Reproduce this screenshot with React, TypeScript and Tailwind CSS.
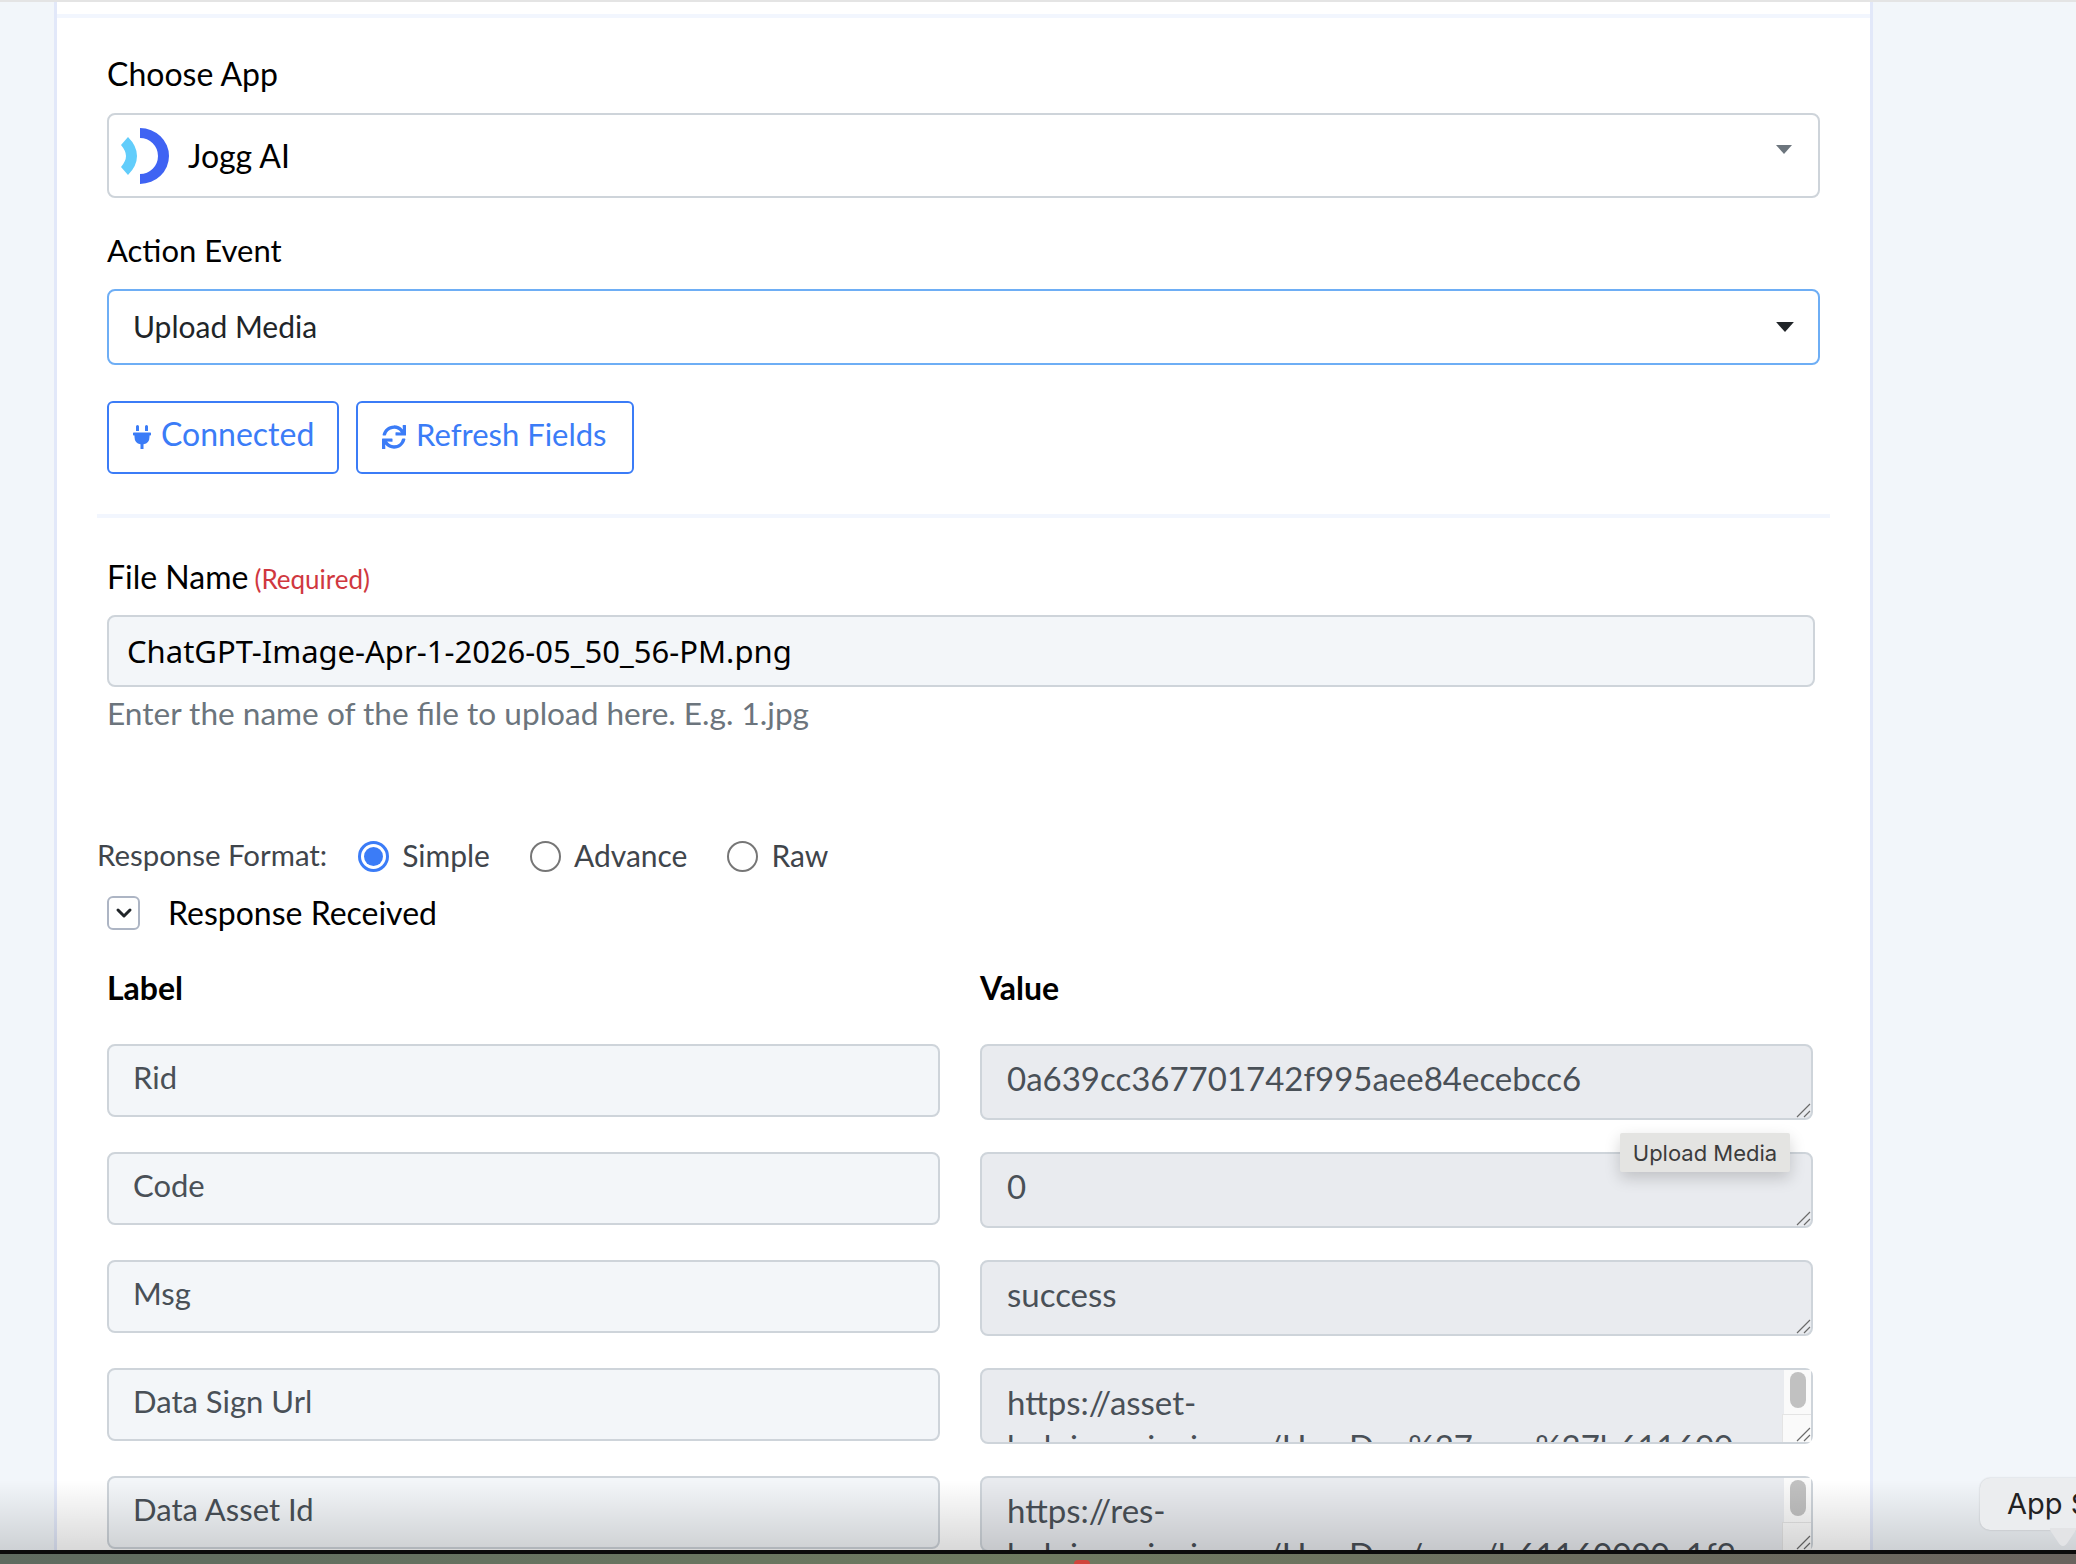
import { ChevronDown } from 'lucide-react';
import { FaPlug, FaSync } from 'react-icons/fa';

const rows = [
    { label: 'Rid', value: '0a639cc367701742f995aee84ecebcc6', scroll: false },
    { label: 'Code', value: '0', scroll: false },
    { label: 'Msg', value: 'success', scroll: false },
    { label: 'Data Sign Url', value: 'https://asset-hub.joggaiapi.com/UserDoc%27user%27b61160000d1f2c3a94e7b1ac06f5d2e8c.png', scroll: true },
    { label: 'Data Asset Id', value: 'https://res-hub.joggaiapi.com/UserDoc/user/b61160000a1f9c3a94e7b1ac06f5d2e8c.png', scroll: true },
];

const Caret = ({ color, w, h }: { color: string; w: number; h: number }) => (
    <svg width={w} height={h} viewBox="0 0 16 9" fill={color}><path d="M0 0h16L8 9z" /></svg>
);

const JoggLogo = () => (
    <svg width="48" height="56" viewBox="0 0 48 56">
        <path d="M7 9Q16 18 16 28Q16 38 7 47L0 39Q5 33 5 28Q5 23 0 17Z" fill="#62cdfb" />
        <path d="M19 0A29 28 0 0 1 19 56L19 46A18 18 0 0 0 19 10Z" fill="#3f63f3" />
    </svg>
);

const Grip = () => (
    <svg className="absolute bottom-[2px] right-[2px]" width="16" height="16" viewBox="0 0 16 16" stroke="#6b6b6b" strokeWidth="1.2">
        <path d="M2 15L15 2M9 15L15 9" />
    </svg>
);

const Radio = ({ label, checked }: { label: string; checked?: boolean }) => (
    <div className="flex items-center gap-[13px]">
        {checked ? (
            <span className="mt-[3px] flex w-[31px] h-[31px] items-center justify-center rounded-full border-[3px] border-[#3b7cf7] bg-white">
                <span className="w-[19px] h-[19px] rounded-full bg-[#3b7cf7]" />
            </span>
        ) : (
            <span className="mt-[3px] w-[31px] h-[31px] rounded-full border-2 border-[#767676] bg-white" />
        )}
        <span className="text-[30px] text-[#3f454b]">{label}</span>
    </div>
);

const ValueBox = ({ value, scroll }: { value: string; scroll: boolean }) => (
    <div className="relative h-[76px]">
        <textarea
            readOnly
            value={value}
            className={`block h-full w-full resize-none overflow-hidden rounded-[8px] border-2 border-[#ced4da] bg-[#e9ebef] pl-[25px] pt-[10px] text-[33px] leading-[44px] text-[#495057] outline-none ${scroll ? 'pr-[60px]' : 'pr-[24px]'}`}
        />
        {scroll && (
            <div className="absolute bottom-[2px] right-[2px] top-[2px] flex w-[29px] flex-col items-end">
                <div className="h-[44px] w-[27px] bg-[#fafafa] px-[6px] pt-[2px]">
                    <div className="h-[36px] w-[16px] rounded-full bg-[#c1c1c1]" />
                </div>
                <div className="h-[28px] w-[29px] border-l border-t border-[#e4e4e4] bg-[#fafafa]" />
            </div>
        )}
        <Grip />
    </div>
);

export default function App() {
    return (
        <div className="relative h-[1564px] overflow-hidden bg-[#f2f6fa] font-['Lato',sans-serif] text-[31px] leading-[44px]">
            <div className="h-[2px] bg-[#e4e4e4]" />
            <div className="ml-[54px] h-[1562px] w-[1819px] border-x-[3px] border-[#e2e8f9] bg-white pt-[12px]">
                <div className="h-[4px] bg-[#f2f6fe]" />
                <div className="pl-[50px] pt-[34px]">
                    <div className="text-[32px] text-black">Choose App</div>
                    <div className="mt-[17px] flex h-[85px] w-[1713px] items-center justify-between rounded-[8px] border-2 border-[#ced4da] pl-[12px] pr-[26px]">
                        <div className="flex items-center gap-[19px]">
                            <JoggLogo />
                            <span className="text-[32px] text-black">Jogg AI</span>
                        </div>
                        <div className="mb-[12px]"><Caret color="#6c757d" w={16} h={9} /></div>
                    </div>
                    <div className="mt-[30px] text-black">Action Event</div>
                    <div className="mt-[17px] flex h-[76px] w-[1713px] items-center justify-between rounded-[8px] border-2 border-[#6eaef5] pl-[24px] pr-[24px] text-[30px] text-[#212529]">
                        <span className="mb-[2px]">Upload Media</span>
                        <Caret color="#212529" w={18} h={10} />
                    </div>
                    <div className="mt-[36px] flex gap-[17px] text-[#3b7cf7]">
                        <div className="flex h-[73px] w-[232px] items-center gap-[10px] rounded-[6px] border-2 border-[#3b7cf7] pb-[2px] pl-[24px]">
                            <FaPlug className="h-[24px] w-[18px]" />
                            <span className="mb-[5px] text-[32px]">Connected</span>
                        </div>
                        <div className="flex h-[73px] w-[278px] items-center gap-[10px] rounded-[6px] border-2 border-[#3b7cf7] pb-[2px] pl-[24px]">
                            <FaSync size={24} />
                            <span className="mb-[5px] text-[31px]">Refresh Fields</span>
                        </div>
                    </div>
                </div>
                <div className="ml-[40px] mt-[40px] h-[4px] w-[1733px] bg-[#f2f6fe]" />
                <div className="pl-[50px] pt-[37px]">
                    <div className="flex items-baseline gap-[6px] text-black">
                        <span className="text-[32px]">File Name</span>
                        <span className="text-[26px] text-[#d0383f]">(Required)</span>
                    </div>
                    <input
                        readOnly
                        value="ChatGPT-Image-Apr-1-2026-05_50_56-PM.png"
                        className="mt-[14px] block h-[72px] w-[1708px] rounded-[8px] border-2 border-[#ced4da] bg-[#f3f6f9] px-[18px] font-['Noto_Sans',sans-serif] text-[31px] text-black outline-none"
                    />
                    <div className="mt-[4px] text-[31.6px] text-[#6c757d]">Enter the name of the file to upload here. E.g. 1.jpg</div>
                </div>
                <div className="mt-[98px] flex items-center pl-[40px] text-[29.4px] text-[#3f454b]">
                    <span className="mr-[31px]">Response Format:</span>
                    <div className="flex gap-[40px]">
                        <Radio label="Simple" checked />
                        <Radio label="Advance" />
                        <Radio label="Raw" />
                    </div>
                </div>
                <div className="mt-[14px] flex items-center gap-[28px] pl-[50px] text-[32px] text-black">
                    <span className="flex h-[34px] w-[33px] items-center justify-center rounded-[6px] border-2 border-[#adb5c4]">
                        <ChevronDown size={24} strokeWidth={3} color="#212529" />
                    </span>
                    <span>Response Received</span>
                </div>
                <div className="mt-[31px] grid w-[1756px] grid-cols-2 gap-x-[40px] pl-[50px] text-[32px] font-bold text-black">
                    <div>Label</div>
                    <div>Value</div>
                </div>
                <div className="mt-[34px] grid w-[1756px] grid-cols-2 gap-x-[40px] gap-y-[32px] pl-[50px]">
                    {rows.map((row) => (
                        <div key={row.label} className="contents">
                            <div className="flex h-[73px] items-center rounded-[8px] border-2 border-[#ced4da] bg-[#f3f6f9] pb-[7px] pl-[24px] text-[#495057]">
                                {row.label}
                            </div>
                            <ValueBox value={row.value} scroll={row.scroll} />
                        </div>
                    ))}
                </div>
            </div>

            {/* tooltips and desktop edge sit over the page */}
            <div className="absolute left-[1620px] top-[1133px] flex h-[39px] w-[170px] items-center justify-center rounded-[2px] bg-[#e4e4e2] font-['Inter',sans-serif] text-[22px] text-[#3c3c3c] shadow-[0_6px_16px_rgba(0,0,0,0.18)]">
                Upload Media
            </div>
            <div className="pointer-events-none absolute inset-x-0 bottom-[14px] h-[70px] bg-gradient-to-b from-transparent to-black/15" />
            <div className="absolute left-[1980px] top-[1478px] h-[52px] w-[120px] rounded-[10px] bg-[#ebedef] pl-[27px] font-['Inter',sans-serif] text-[29px] leading-[52px] text-[#222] whitespace-nowrap shadow-[0_0_2px_rgba(0,0,0,0.2)]">
                App Settings
            </div>
            <svg className="absolute left-[2050px] top-[1528px]" width="26" height="22" viewBox="0 0 26 22" fill="#e3e4e6"><path d="M0 2L8 14Q13 22 18 14L26 2V0H0Z" /></svg>
            <div className="absolute inset-x-0 bottom-0 h-[14px] border-t-[4px] border-[#0b0b0b] bg-gradient-to-r from-[#5f6b60] via-[#6e7a60] to-[#6a635e]">
                <div className="ml-[1074px] mt-[6px] h-[4px] w-[16px] rounded-t-full bg-[#d0443c]" />
            </div>
        </div>
    );
}
